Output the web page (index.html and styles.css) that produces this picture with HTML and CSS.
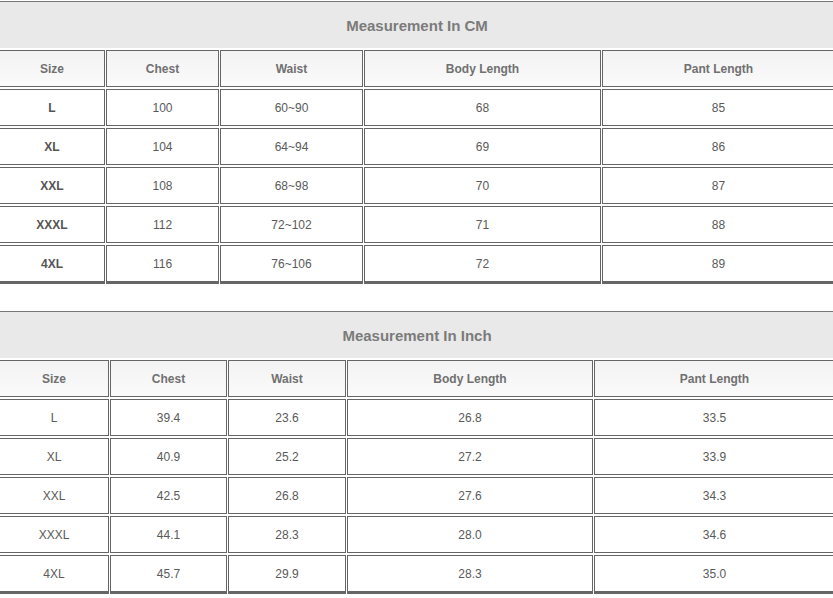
FILE: index.html
```html
<!DOCTYPE html>
<html lang="en">
<head>
<meta charset="utf-8">
<title>Measurement Chart</title>
<link rel="stylesheet" href="styles.css">
</head>
<body>
<table class="chart chart-cm">
  <colgroup>
    <col class="cm-size"><col class="cm-chest"><col class="cm-waist"><col class="cm-body"><col class="cm-pant">
  </colgroup>
  <thead>
    <tr><th colspan="5" class="title">Measurement In CM</th></tr>
    <tr class="head"><th>Size</th><th>Chest</th><th>Waist</th><th>Body Length</th><th>Pant Length</th></tr>
  </thead>
  <tbody>
    <tr><td class="size">L</td><td>100</td><td>60~90</td><td>68</td><td>85</td></tr>
    <tr><td class="size">XL</td><td>104</td><td>64~94</td><td>69</td><td>86</td></tr>
    <tr><td class="size">XXL</td><td>108</td><td>68~98</td><td>70</td><td>87</td></tr>
    <tr><td class="size">XXXL</td><td>112</td><td>72~102</td><td>71</td><td>88</td></tr>
    <tr><td class="size">4XL</td><td>116</td><td>76~106</td><td>72</td><td>89</td></tr>
  </tbody>
</table>
<table class="chart chart-inch">
  <colgroup>
    <col class="in-size"><col class="in-chest"><col class="in-waist"><col class="in-body"><col class="in-pant">
  </colgroup>
  <thead>
    <tr><th colspan="5" class="title">Measurement In Inch</th></tr>
    <tr class="head"><th>Size</th><th>Chest</th><th>Waist</th><th>Body Length</th><th>Pant Length</th></tr>
  </thead>
  <tbody>
    <tr><td>L</td><td>39.4</td><td>23.6</td><td>26.8</td><td>33.5</td></tr>
    <tr><td>XL</td><td>40.9</td><td>25.2</td><td>27.2</td><td>33.9</td></tr>
    <tr><td>XXL</td><td>42.5</td><td>26.8</td><td>27.6</td><td>34.3</td></tr>
    <tr><td>XXXL</td><td>44.1</td><td>28.3</td><td>28.0</td><td>34.6</td></tr>
    <tr><td>4XL</td><td>45.7</td><td>29.9</td><td>28.3</td><td>35.0</td></tr>
  </tbody>
</table>
</body>
</html>
```
FILE: styles.css
```css
html, body {
  margin: 0;
  padding: 0;
  background: #ffffff;
  overflow: hidden;
}

body {
  font-family: "Liberation Sans", Arial, sans-serif;
  color: #555555;
}

.chart {
  border-collapse: separate;
  border-spacing: 1px 2px;
  table-layout: fixed;
  width: 838px;
  margin-left: -2px;
}

.chart-cm {
  margin-top: -1px;
}

.chart-inch {
  margin-top: 23px;
}

.cm-size { width: 106px; }
.cm-chest { width: 113px; }
.cm-waist { width: 143px; }
.cm-body { width: 237px; }
.cm-pant { width: 233px; }

.in-size { width: 110px; }
.in-chest { width: 117px; }
.in-waist { width: 118px; }
.in-body { width: 246px; }
.in-pant { width: 241px; }

.title {
  box-sizing: border-box;
  height: 47px;
  padding: 0;
  border-top: 1px solid #777777;
  background: #e9e9e9;
  color: #7b7b7b;
  font-size: 15px;
  font-weight: bold;
  text-align: center;
  vertical-align: middle;
}

.head th,
.chart td {
  box-sizing: border-box;
  height: 37px;
  padding: 0;
  border: 1px solid #666666;
  text-align: center;
  vertical-align: middle;
  font-size: 12px;
}

.head th {
  background: linear-gradient(#f3f3f3, #fafafa);
  color: #707070;
  font-weight: bold;
}

.chart td {
  background: #ffffff;
  color: #5a5a5a;
}

.chart td.size {
  font-weight: bold;
  color: #555555;
}

.chart tbody tr:last-child td {
  height: 39px;
  border-bottom-width: 3px;
}
```
